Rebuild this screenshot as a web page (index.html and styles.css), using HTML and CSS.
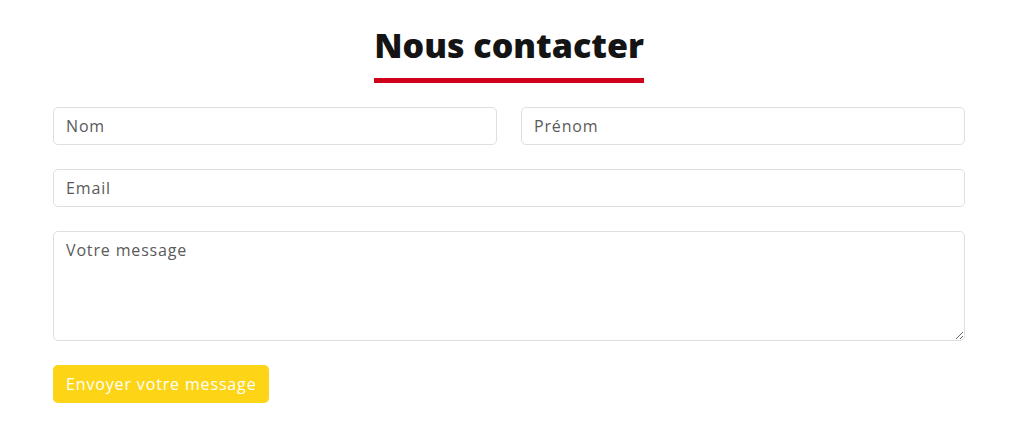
FILE: index.html
```html
<!DOCTYPE html>
<html lang="fr">
<head>
<meta charset="utf-8">
<title>Nous contacter</title>
<link rel="stylesheet" href="styles.css">
</head>
<body>
<section class="contact">
  <div class="heading">
    <h1 class="title">Nous contacter</h1>
  </div>
  <form class="form">
    <div class="row two">
      <input class="field" type="text" placeholder="Nom">
      <input class="field" type="text" placeholder="Prénom">
    </div>
    <div class="row">
      <input class="field" type="email" placeholder="Email">
    </div>
    <div class="row">
      <textarea class="field area" placeholder="Votre message"></textarea>
    </div>
    <div class="row">
      <button class="btn" type="button">Envoyer votre message</button>
    </div>
  </form>
</section>
</body>
</html>
```
FILE: styles.css
```css
html, body {
  margin: 0;
  padding: 0;
  background: #ffffff;
}
body {
  font-family: "Open Sans", "Noto Sans", sans-serif;
}
.contact {
  width: 912px;
  margin: 0 0 0 53px;
  padding-top: 22px;
}
.heading {
  display: flex;
  justify-content: center;
}
.title {
  margin: 0;
  font-size: 34px;
  line-height: 46px;
  font-weight: 800;
  color: #141414;
  padding-bottom: 10px;
  border-bottom: 5px solid #d0021b;
}
.form {
  margin-top: 24px;
  display: flex;
  flex-direction: column;
  gap: 24px;
}
.row {
  display: flex;
}
.row.two {
  display: grid;
  grid-template-columns: 1fr 1fr;
  gap: 24px;
}
.field {
  box-sizing: border-box;
  width: 100%;
  height: 38px;
  border: 1px solid #dcdfe3;
  border-radius: 5px;
  padding: 0 12px;
  font-family: inherit;
  font-size: 16px;
  letter-spacing: 0.85px;
  color: #555;
  background: #fff;
  outline: none;
}
.field::placeholder {
  color: #5a5a5a;
  opacity: 1;
}
.area {
  height: 110px;
  padding: 7px 12px;
  resize: vertical;
}
.btn {
  height: 38px;
  padding: 0 13px;
  border: none;
  border-radius: 5px;
  background: #fdd516;
  color: #ffffff;
  font-family: inherit;
  font-size: 16px;
  letter-spacing: 0.85px;
  cursor: pointer;
}
```
